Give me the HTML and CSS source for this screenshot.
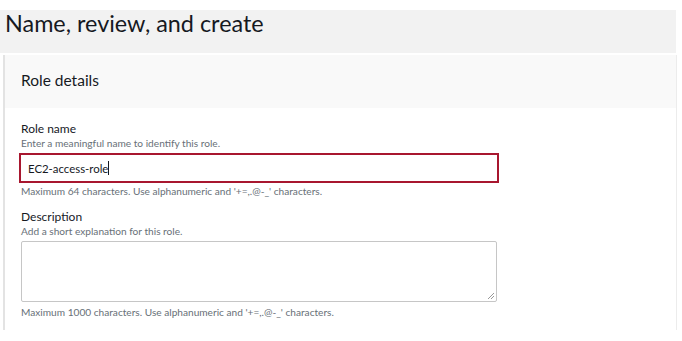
FILE: index.html
```html
<!DOCTYPE html>
<html lang="en">
<head>
<meta charset="utf-8">
<title>Name, review, and create</title>
<link rel="stylesheet" href="styles.css">
</head>
<body>
<div class="page-head">
  <h1 class="page-title">Name, review, and create</h1>
</div>
<section class="card">
  <header class="card-head">
    <h2 class="card-title">Role details</h2>
  </header>
  <div class="card-body">
    <div class="field field-name">
      <label class="field-label">Role name</label>
      <div class="field-desc">Enter a meaningful name to identify this role.</div>
      <div class="input input-highlight"><span class="input-text">EC2-access-role</span><span class="caret"></span></div>
      <div class="field-hint">Maximum 64 characters. Use alphanumeric and '+=,.@-_' characters.</div>
    </div>
    <div class="field field-desc-block">
      <label class="field-label">Description</label>
      <div class="field-desc">Add a short explanation for this role.</div>
      <div class="textarea">
        <svg class="grip" width="9" height="9" viewBox="0 0 9 9"><path d="M8 2 L2 8 M8 5 L5 8" stroke="#999" stroke-width="1" fill="none"/></svg>
      </div>
      <div class="field-hint">Maximum 1000 characters. Use alphanumeric and '+=,.@-_' characters.</div>
    </div>
  </div>
</section>
</body>
</html>
```

FILE: styles.css
```css
html, body {
  margin: 0;
  padding: 0;
  background: #ffffff;
}
body {
  font-family: Lato, "Open Sans", sans-serif;
  color: #16191f;
  width: 682px;
  height: 341px;
  overflow: hidden;
}
.page-head {
  margin-top: 10px;
  width: 676px;
  height: 43px;
  background: #f2f2f2;
}
.page-title {
  margin: 0 0 0 5px;
  font-size: 23.4px;
  font-weight: 400;
  line-height: 26px;
  color: #16191f;
}
.card {
  margin: 2px 0 0 3px;
  width: 671px;
  height: 275px;
  border-left: 2px solid #e3e3e3;
  border-right: 1px solid #ececec;
}
.card-head {
  height: 53px;
  background: #f9f9f9;
  display: flex;
  align-items: center;
  padding-left: 16px;
}
.card-title {
  margin: 0 0 3px 0;
  font-size: 15.5px;
  font-weight: 400;
  color: #16191f;
}
.card-body {
  padding: 13px 0 0 16px;
}
.field-label {
  display: block;
  font-size: 12px;
  line-height: 15px;
  color: #16191f;
}
.field-desc {
  font-size: 10.15px;
  line-height: 14px;
  color: #687078;
}
.input {
  margin: 3px 0 0 -2px;
  width: 469px;
  height: 26px;
  border: 2px solid #a8172f;
  display: flex;
  align-items: center;
  padding-left: 7px;
  box-sizing: content-box;
}
.input-text {
  font-size: 11.4px;
  color: #16191f;
}
.caret {
  width: 1px;
  height: 14px;
  background: #16191f;
}
.field-hint {
  margin-top: 1px;
  font-size: 10.15px;
  line-height: 14px;
  color: #687078;
}
.field-desc-block {
  margin-top: 11px;
}
.textarea {
  position: relative;
  margin-top: 3px;
  width: 474px;
  height: 59px;
  border: 1px solid #c6c6c6;
  border-radius: 2px;
}
.grip {
  position: absolute;
  right: 1px;
  bottom: 1px;
}
.field-desc-block .field-hint {
  margin-top: 3px;
}
```
